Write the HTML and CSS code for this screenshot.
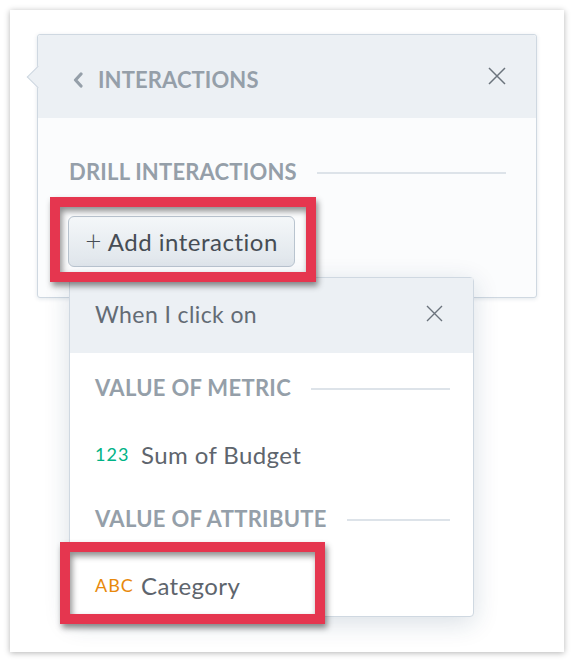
FILE: index.html
```html
<!DOCTYPE html>
<html>
<head>
    <meta name="viewport" content="width=device-width, initial-scale=1">
    <link rel="stylesheet" href="styles.css">
</head>
<body>
    <div class="frame">
        <div class="panel">
            <div class="panel-head">
                <span class="back">
                    <svg width="12" height="16" viewBox="0 0 12 16"><polyline points="9,2 3.5,8 9,14" fill="none" stroke="#959fa9" stroke-width="3.2" stroke-linejoin="round" stroke-linecap="round"/></svg>
                    INTERACTIONS
                </span>
                <svg class="close" width="18" height="18" viewBox="0 0 18 18"><path d="M1 1L17 17M17 1L1 17" stroke="#6b737c" stroke-width="1.5"/></svg>
            </div>
            <div class="panel-body">
                <div class="section-title"><span>DRILL INTERACTIONS</span><i></i></div>
                <button class="add-btn"><span class="plus">+</span> Add interaction</button>
            </div>
        </div>

        <!-- dropdown opened from the button -->
        <div class="dropdown">
            <div class="dropdown-head">
                <span>When I click on</span>
                <svg class="close" width="17" height="17" viewBox="0 0 17 17"><path d="M1 1L16 16M16 1L1 16" stroke="#6b737c" stroke-width="1.4"/></svg>
            </div>
            <div class="dropdown-body">
                <div class="section-title"><span>VALUE OF METRIC</span><i></i></div>
                <div class="item"><span class="type metric">123</span>Sum of Budget</div>
                <div class="section-title"><span>VALUE OF ATTRIBUTE</span><i></i></div>
                <div class="item"><span class="type attr">ABC</span>Category</div>
            </div>
        </div>

        <div class="mark mark-btn"></div>
        <div class="mark mark-item"></div>
    </div>
</body>
</html>
```

FILE: styles.css
```css
body {
    margin: 0;
    background-color: #ffffff;
    font-family: Lato, "Open Sans", Arial, sans-serif;
}

.frame {
    position: relative;
    margin: 10px;
    width: 554px;
    height: 642px;
    padding: 24px 27px;
    box-sizing: border-box;
    background-color: #fff;
    box-shadow: 0 1px 6px rgba(0, 0, 0, 0.3);
}

/* main panel */
.panel {
    position: relative;
    width: 500px;
    height: 264px;
    box-sizing: border-box;
    border: 1px solid #cfd8e1;
    border-radius: 3px;
    background-color: #fbfcfd;
    box-shadow: 0 1px 4px rgba(20, 56, 93, 0.12);
}

.panel::before {
    content: "";
    position: absolute;
    left: -8px;
    top: 34px;
    width: 15px;
    height: 15px;
    background-color: #ecf0f4;
    border-left: 1px solid #cfd8e1;
    border-bottom: 1px solid #cfd8e1;
    transform: rotate(45deg);
}

.panel-head {
    display: flex;
    align-items: center;
    justify-content: space-between;
    height: 83px;
    padding: 0 30px 0 34px;
    box-sizing: border-box;
    background-color: #ecf0f4;
    border-radius: 3px 3px 0 0;
}

.back {
    display: flex;
    align-items: center;
    gap: 14px;
    margin-top: 6px;
    font-size: 22px;
    font-weight: bold;
    letter-spacing: 0.1px;
    color: #959fa9;
}

.panel-head .close {
    margin-top: -2px;
}

.panel-body {
    padding: 38px 30px 0 31px;
}

.section-title {
    display: flex;
    align-items: center;
    gap: 20px;
    height: 30px;
    font-size: 22px;
    font-weight: bold;
    letter-spacing: 0.2px;
    color: #959fa9;
    white-space: nowrap;
}

.section-title i {
    flex: 1;
    height: 2px;
    margin-top: 3px;
    background-color: #dde3e9;
}

.add-btn {
    display: block;
    margin-top: 30px;
    margin-left: -1px;
    width: 227px;
    height: 51px;
    border: 1px solid #b9c4cf;
    border-radius: 6px;
    background: linear-gradient(#f4f7f9, #dfe5eb);
    font-family: inherit;
    font-size: 24px;
    letter-spacing: 0.5px;
    color: #464d55;
    padding: 0 0 2px 0;
}

.add-btn .plus {
    font-weight: 300;
    font-size: 28px;
    line-height: 1;
}

/* dropdown overlay */
.dropdown {
    position: absolute;
    left: 59px;
    top: 267px;
    width: 405px;
    height: 340px;
    box-sizing: border-box;
    border: 1px solid #cfd8e1;
    border-radius: 4px;
    background-color: #fff;
    box-shadow: 0 6px 26px rgba(20, 56, 93, 0.16);
}

.dropdown-head {
    display: flex;
    align-items: center;
    justify-content: space-between;
    height: 75px;
    padding: 0 30px 4px 25px;
    box-sizing: border-box;
    background-color: #ecf0f4;
    font-size: 23px;
    letter-spacing: 0.4px;
    color: #636b74;
}

.dropdown-body {
    padding: 19px 23px 0 25px;
}

.dropdown-body .section-title {
    letter-spacing: 0.3px;
}

.dropdown-body .section-title + .item + .section-title {
    margin-top: 29px;
}

.item {
    display: flex;
    align-items: center;
    height: 40px;
    margin-top: 32px;
    font-size: 24px;
    letter-spacing: 0.4px;
    color: #5e656d;
}

.type {
    width: 46px;
    font-size: 18px;
    letter-spacing: 1px;
    margin-top: -1px;
}

.type.metric { color: #00b386; }
.type.attr { color: #e8890c; }

/* red highlight marks */
.mark {
    position: absolute;
    border: 10px solid #e5364f;
    box-sizing: border-box;
    box-shadow: 2px 4px 6px rgba(0, 0, 0, 0.45), inset 2px 4px 6px rgba(0, 0, 0, 0.45);
}

.mark-btn {
    left: 40px;
    top: 187px;
    width: 266px;
    height: 85px;
}

.mark-item {
    left: 50px;
    top: 532px;
    width: 265px;
    height: 82px;
}
```
